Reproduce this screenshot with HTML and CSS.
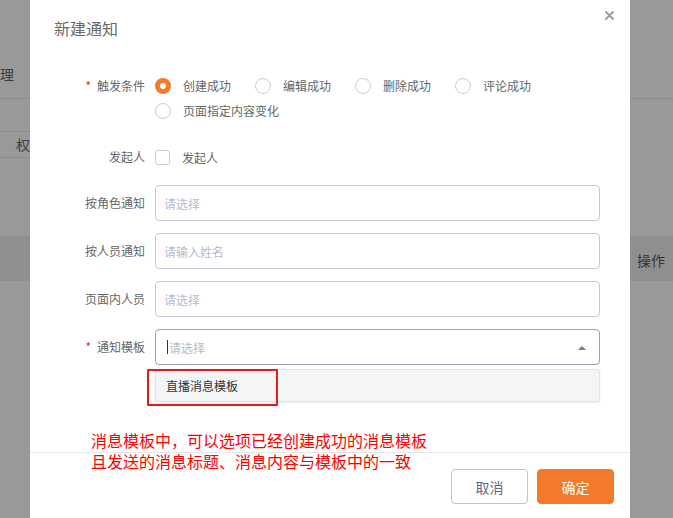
FILE: index.html
```html
<!DOCTYPE html>
<html lang="zh">
<head>
<meta charset="utf-8">
<title>新建通知</title>
<link rel="stylesheet" href="styles.css">
</head>
<body>
<div class="page">
  <div class="page-head"><span class="crumb">管理</span></div>
  <div class="toolbar"><span class="tab">权限</span></div>
  <div class="table-head"><span class="op">操作</span></div>
</div>

<div class="modal">
  <div class="modal-header">
    <span class="modal-title">新建通知</span>
    <svg class="close" width="9" height="9" viewBox="0 0 9 9"><path d="M1 1L8 8M8 1L1 8" stroke="#8e99ab" stroke-width="1.8" stroke-linecap="round"/></svg>
  </div>

  <div class="form">
    <div class="item item-radio">
      <label class="label"><span class="req">*</span>触发条件</label>
      <div class="radio-group">
        <span class="radio checked"><i class="dot"></i>创建成功</span>
        <span class="radio"><i class="dot"></i>编辑成功</span>
        <span class="radio"><i class="dot"></i>删除成功</span>
        <span class="radio"><i class="dot"></i>评论成功</span>
        <span class="radio"><i class="dot"></i>页面指定内容变化</span>
      </div>
    </div>

    <div class="item item-check">
      <label class="label">发起人</label>
      <span class="check"><i class="box"></i>发起人</span>
    </div>

    <div class="item item-input first">
      <label class="label">按角色通知</label>
      <div class="field"><div class="input"><span class="ph">请选择</span></div></div>
    </div>

    <div class="item item-input">
      <label class="label">按人员通知</label>
      <div class="field"><div class="input"><span class="ph">请输入姓名</span></div></div>
    </div>

    <div class="item item-input">
      <label class="label">页面内人员</label>
      <div class="field"><div class="input"><span class="ph">请选择</span></div></div>
    </div>

    <div class="item item-input">
      <label class="label"><span class="req">*</span>通知模板</label>
      <div class="field">
        <div class="input focused"><span class="caret"></span><span class="ph">请选择</span><i class="arrow"></i></div>
        <div class="dropdown"><div class="option">直播消息模板</div></div>
        <div class="mark"></div>
      </div>
    </div>
  </div>

  <div class="footer">
    <button class="btn btn-cancel">取消</button>
    <button class="btn btn-ok">确定</button>
  </div>

  <div class="note">消息模板中，可以选项已经创建成功的消息模板<br>且发送的消息标题、消息内容与模板中的一致</div>
</div>
</body>
</html>
```

FILE: styles.css
```css
* {
  box-sizing: border-box;
  margin: 0;
  padding: 0;
}

html, body {
  width: 673px;
  height: 518px;
  overflow: hidden;
}

body {
  position: relative;
  background: #999999;
  font-family: "Noto Sans CJK SC", "Noto Sans", sans-serif;
}

/* background page (under the mask) */
.page {
  display: flex;
  flex-direction: column;
}

.page-head {
  height: 99px;
  border-bottom: 1px solid #8a8a8a;
  display: flex;
  align-items: flex-end;
  padding-bottom: 14px;
}

.crumb {
  margin-left: -14px;
  font-size: 14px;
  line-height: 20px;
  color: #3d3d3d;
}

.toolbar {
  height: 137px;
  padding-top: 32px;
}

.tab {
  display: inline-block;
  margin-left: -10px;
  padding: 0 24px 0 26px;
  height: 27px;
  line-height: 25px;
  border-top: 1px solid #8a8a8a;
  border-bottom: 1px solid #8a8a8a;
  font-size: 14px;
  color: #3d3d3d;
}

.table-head {
  height: 45px;
  background: #8f8f8f;
  display: flex;
  justify-content: flex-end;
  padding-right: 8px;
}

.op {
  font-size: 14px;
  line-height: 49px;
  color: #333333;
}

/* modal */
.modal {
  position: absolute;
  left: 30px;
  top: 0;
  width: 600px;
  height: 540px;
  background: #ffffff;
}

.modal-header {
  position: relative;
  height: 56px;
  padding-left: 24px;
}

.modal-title {
  font-size: 16px;
  line-height: 56px;
  color: #6a6a6a;
}

.close {
  position: absolute;
  right: 16px;
  top: 11px;
}

.form {
  padding: 17px 30px 0 30px;
}

.item {
  display: flex;
}

.label {
  width: 95px;
  flex: none;
  padding-right: 10px;
  text-align: right;
  font-size: 12px;
  color: #666666;
}

.req {
  color: #ff1a1a;
  margin-right: 6px;
}

.item-radio .label {
  line-height: 25px;
}

.radio-group {
  display: flex;
  flex-wrap: wrap;
  width: 445px;
}

.radio {
  display: flex;
  align-items: center;
  height: 25px;
  margin-right: 24px;
  font-size: 12px;
  color: #666666;
}

.dot {
  width: 16px;
  height: 16px;
  border-radius: 50%;
  border: 1px solid #c8ced8;
  margin-right: 12px;
  background: #ffffff;
}

.radio.checked .dot {
  border: 5px solid #f37a2a;
}

.item-check {
  margin-top: 16px;
  height: 36px;
  align-items: center;
}

.item-check .label {
  line-height: 36px;
}

.check {
  display: flex;
  align-items: center;
  font-size: 12px;
  color: #666666;
}

.box {
  width: 15px;
  height: 15px;
  border: 1px solid #c8ced8;
  border-radius: 3px;
  margin-right: 12px;
}

.item-input {
  margin-top: 12px;
}

.item-input.first {
  margin-top: 10px;
}

.item-input .label {
  line-height: 36px;
}

.field {
  position: relative;
  flex: 1;
}

.input {
  position: relative;
  display: flex;
  align-items: center;
  height: 36px;
  padding-left: 8px;
  border: 1px solid #c3cad4;
  border-radius: 4px;
  background: #ffffff;
}

.input.focused {
  border-color: #98a3b3;
}

.ph {
  font-size: 12px;
  color: #b4bccb;
}

.caret {
  width: 1px;
  height: 14px;
  background: #333333;
  margin-left: 3px;
  margin-right: 1px;
}

.arrow {
  position: absolute;
  right: 13px;
  top: 16px;
  width: 0;
  height: 0;
  border-left: 4px solid transparent;
  border-right: 4px solid transparent;
  border-bottom: 4px solid #6f7d90;
}

.dropdown {
  position: absolute;
  left: 0;
  right: 0;
  top: 40px;
  height: 33px;
  background: #f4f5f7;
  border: 1px solid #e1e4ea;
  border-radius: 3px;
  box-shadow: 0 1px 3px rgba(0, 0, 0, 0.08);
}

.option {
  padding-left: 10px;
  font-size: 12px;
  line-height: 31px;
  color: #333333;
}

.mark {
  position: absolute;
  left: -8px;
  top: 40px;
  width: 131px;
  height: 37px;
  border: 2px solid #e8191d;
  border-radius: 1px;
}

.footer {
  margin-top: 87px;
  border-top: 1px solid #e4e7ed;
  padding: 16px 16px 0 0;
  display: flex;
  justify-content: flex-end;
  gap: 9px;
}

.btn {
  width: 77px;
  height: 35px;
  border-radius: 4px;
  font-family: "Noto Sans CJK SC", "Noto Sans", sans-serif;
  font-size: 14px;
  cursor: pointer;
}

.btn-cancel {
  background: #ffffff;
  border: 1px solid #bcc5d1;
  color: #5e6d82;
}

.btn-ok {
  background: #f37a2a;
  border: 1px solid #f37a2a;
  color: #ffffff;
}

.note {
  position: absolute;
  left: 61px;
  top: 430px;
  font-size: 16px;
  line-height: 21px;
  color: #ff0000;
  white-space: nowrap;
}
```
